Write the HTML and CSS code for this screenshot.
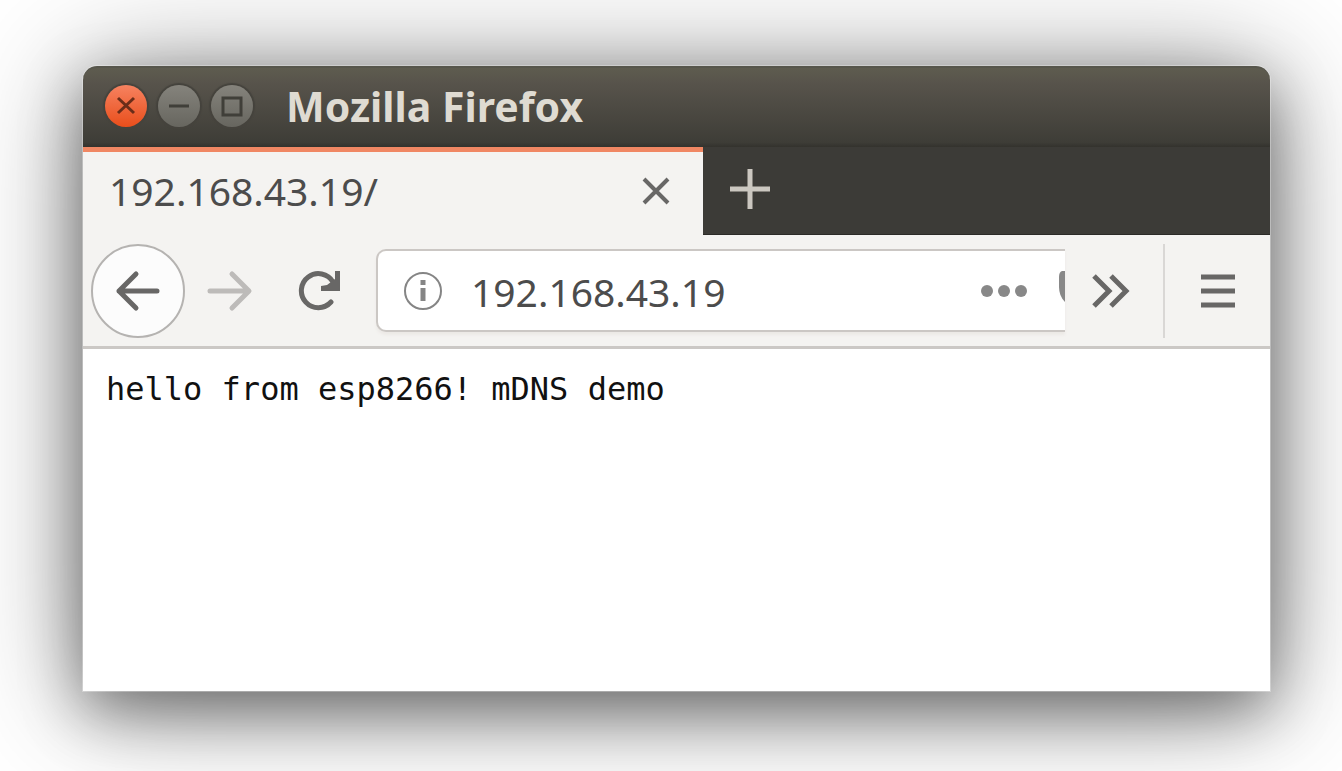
FILE: index.html
```html
<!DOCTYPE html>
<html lang="en">
<head>
<meta charset="utf-8">
<meta name="viewport" content="width=device-width, initial-scale=1">
<title>Mozilla Firefox</title>
<link rel="stylesheet" href="styles.css">
</head>
<body>
<div class="window">
  <header class="titlebar">
    <div class="window-controls">
      <button class="control control-close" aria-label="Close window"><svg viewBox="0 0 42 42"><path d="M13 13l16 15M29 13L13 28"/></svg></button>
      <button class="control" aria-label="Minimize"><svg viewBox="0 0 42 42"><path d="M11 21h20"/></svg></button>
      <button class="control" aria-label="Maximize"><svg viewBox="0 0 42 42"><path d="M12 13h18v17H12z"/></svg></button>
    </div>
    <h1 class="title">Mozilla Firefox</h1>
  </header>
  <div class="tabstrip">
    <div class="tab">
      <span class="tab-label">192.168.43.19/</span>
      <button class="icon-button tab-close" aria-label="Close tab"><svg width="30" height="30" viewBox="0 0 30 30"><path d="M3 3l24 24M27 3L3 27"/></svg></button>
    </div>
    <button class="icon-button new-tab" aria-label="New tab"><svg width="40" height="40" viewBox="0 0 40 40"><path d="M20 0v40M0 20h40"/></svg></button>
  </div>
  <nav class="toolbar">
    <button class="icon-button back" aria-label="Back"><svg width="46" height="42" viewBox="0 0 46 42"><path d="M42 21H4M21 4L4 21l17 17"/></svg></button>
    <button class="icon-button forward" aria-label="Forward" disabled><svg width="46" height="42" viewBox="0 0 46 42"><path d="M3 21h38M25 4l17 17-17 17"/></svg></button>
    <button class="icon-button reload" aria-label="Reload"><svg width="44" height="42" viewBox="0 0 44 42"><path class="reload-arc" d="M33 32A17 17 0 1 1 35 12"/><path class="reload-head" d="M37 1h5v20H23v-5l6-1 8-6z"/></svg></button>
    <div class="urlbar">
      <button class="icon-button info" aria-label="Site information"><svg width="40" height="40" viewBox="0 0 40 40"><circle cx="20" cy="20" r="18"/><path d="M20 17v13M20 9v5"/></svg></button>
      <input class="address" type="text" aria-label="Address" value="192.168.43.19">
      <button class="icon-button more" aria-label="Page actions"><svg width="46" height="12" viewBox="0 0 46 12"><circle cx="6" cy="6" r="6"/><circle cx="23" cy="6" r="6"/><circle cx="40" cy="6" r="6"/></svg></button>
      <button class="icon-button pocket" aria-label="Save to Pocket"><svg width="6" height="32" viewBox="0 0 6 32"><path d="M6 0H3Q0 1 0 6v10q0 9 6 15z"/></svg></button>
    </div>
    <button class="icon-button overflow" aria-label="More tools"><svg width="38" height="34" viewBox="0 0 38 34"><path d="M2 2l15 15L2 32M19 2l15 15-15 15"/></svg></button>
    <button class="icon-button menu" aria-label="Open menu"><svg width="34" height="34" viewBox="0 0 34 34"><path d="M0 3h34M0 17h34M0 31h34"/></svg></button>
  </nav>
  <main class="page"><pre class="message">hello from esp8266! mDNS demo</pre></main>
</div>
</body>
</html>
```
FILE: styles.css
```css
* { box-sizing: border-box; }

body {
  margin: 0;
  min-height: 100vh;
  padding: 66px 72px 80px 83px;
  display: flex;
  overflow: hidden;
  background: #fff;
  font-family: "Noto Sans", "Open Sans", sans-serif;
}

button {
  padding: 0;
  border: 0;
  background: none;
}

svg { display: block; fill: none; }

.window {
  flex: 1;
  min-width: 0;
  display: flex;
  flex-direction: column;
  border-radius: 14px 14px 0 0;
  background: #fff;
  box-shadow: 0 0 0 1px rgba(255, 255, 255, 0.3), 0 20px 60px rgba(0, 0, 0, 0.4), 0 8px 120px rgba(0, 0, 0, 0.45);
}

.titlebar {
  height: 81px;
  display: flex;
  align-items: center;
  gap: 33px;
  padding: 0 22px 3px;
  border-radius: 14px 14px 0 0;
  border-top: 2px solid #57564c;
  background: linear-gradient(#5e5c4f, #57534b 20%, #3e3d37 94%, #33322d);
}

.window-controls { display: flex; gap: 11px; }

.control {
  width: 42px;
  height: 42px;
  border-radius: 50%;
  background: linear-gradient(#85837c, #67665f);
  box-shadow: 0 0 1px 2px #45433d;
}

.control svg { width: 42px; height: 42px; stroke: #403f39; stroke-width: 3; }
.control-close { background: linear-gradient(#f68260, #e94e1b); }
.control-close svg { stroke: #6a2d19; }

.title {
  margin: 0;
  color: #dfdbd2;
  font-size: 41px;
  font-weight: 700;
  line-height: 48px;
}

.tabstrip {
  height: 88px;
  display: flex;
  background: #3c3b37;
  border-bottom: 1px solid #2b2a27;
}

.tab {
  width: 620px;
  height: 88px;
  display: flex;
  align-items: center;
  justify-content: space-between;
  padding: 0 32px 6px 26px;
  border-top: 5px solid #f08763;
  background: #f4f3f1;
}

.tab-label { color: #4c4c4c; font-size: 39px; line-height: 48px; }

.icon-button {
  flex: none;
  display: flex;
  align-items: center;
  justify-content: center;
}

.icon-button svg { stroke: #686766; stroke-width: 5; }
.tab-close svg { stroke-width: 4; }
.new-tab { width: 93px; height: 83px; }
.new-tab svg { stroke: #cbc7c0; }

.toolbar {
  height: 114px;
  display: flex;
  align-items: center;
  padding-left: 8px;
  background: #f4f3f1;
  border-bottom: 3px solid #cbc8c5;
}

.back {
  width: 94px;
  height: 94px;
  border: 2px solid #b5b3b1;
  border-radius: 50%;
  background: #fcfcfc;
}

.back svg, .forward svg { stroke-width: 5; stroke-linecap: round; stroke-linejoin: round; }
.reload svg { stroke-width: 5; stroke-linecap: round; }
.forward { width: 90px; height: 94px; }
.forward svg { stroke: #bdbbb9; }
.reload { width: 90px; height: 94px; }
.icon-button .reload-head { fill: #686766; stroke: none; }

.urlbar {
  flex: 1;
  min-width: 0;
  height: 83px;
  margin-left: 11px;
  display: flex;
  align-items: center;
  padding-left: 25px;
  border: 2px solid #cbc7c4;
  border-right: 0;
  border-radius: 10px 0 0 10px;
  background: #fff;
  box-shadow: 0 3px 3px #ece9e6;
}

.info svg { stroke: #858585; stroke-width: 2; }
.info path { stroke-width: 5; }

.address {
  flex: 1;
  min-width: 0;
  height: 60px;
  margin-left: 24px;
  padding: 2px 0 0 4px;
  border: 0;
  outline: 0;
  background: none;
  color: #4c4c4c;
  font: 39px "Noto Sans", "Open Sans", sans-serif;
}

.more { margin-right: 32px; }
.more svg, .pocket svg { fill: #888; stroke: none; }
.pocket { padding-bottom: 8px; }

.overflow { width: 98px; height: 94px; padding-right: 6px; }
.overflow svg { stroke-width: 5; }

.menu {
  width: 107px;
  height: 94px;
  border-left: 2px solid #d9d7d5;
}

.page { flex: 1; padding: 20px 23px; }

.message {
  margin: 0;
  color: #111;
  font: 32px/40px "DejaVu Sans Mono", monospace;
}
```
